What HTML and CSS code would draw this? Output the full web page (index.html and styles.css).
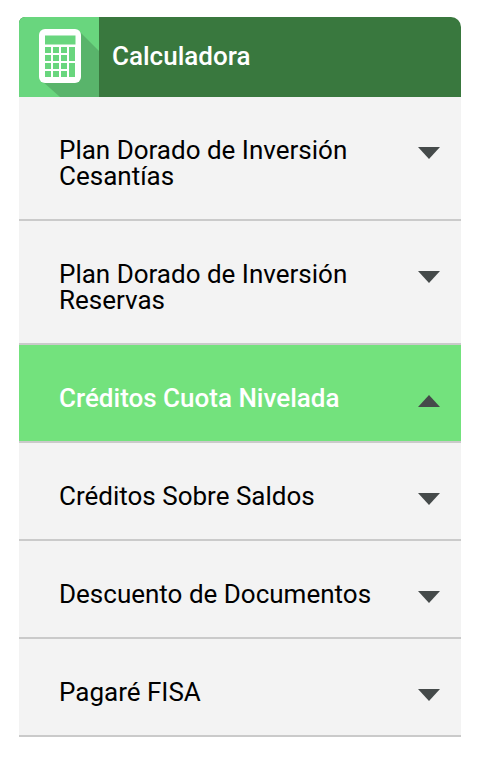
FILE: index.html
```html
<!DOCTYPE html>
<html lang="es">
<head>
<meta charset="utf-8">
<meta name="viewport" content="width=device-width, initial-scale=1">
<title>Calculadora</title>
<link rel="stylesheet" href="styles.css">
</head>
<body>
<main class="panel">
  <header class="panel-header">
    <svg class="logo" viewBox="0 0 80 80" aria-hidden="true">
      <rect width="80" height="80" fill="#69d67e"/>
      <path d="M61 15L80 34V80H41L23 64Z" fill="#59b46b"/>
      <rect x="20" y="12" width="42" height="54" rx="6" fill="#fff"/>
      <path d="M26 18.500h30.500v9H26zM26 30h6v6h-6zM34 30h6v6h-6zM42 30h6v6h-6zM26 38h6v6h-6zM34 38h6v6h-6zM42 38h6v6h-6zM26 46h6v6h-6zM34 46h6v6h-6zM42 46h6v6h-6zM26 54h6v6h-6zM34 54h6v6h-6zM42 54h6v6h-6zM50 30h6v14h-6zM50 46h6v14h-6z" fill="#69d67e"/>
    </svg>
    <h1 class="title">Calculadora</h1>
  </header>
  <nav>
    <button class="item" type="button" aria-expanded="false"><span class="label">Plan Dorado de Inversión Cesantías</span><svg class="arrow" viewBox="0 0 22 12" aria-hidden="true"><path d="M0 0H22L11 12Z"/></svg></button>
    <button class="item" type="button" aria-expanded="false"><span class="label">Plan Dorado de Inversión Reservas</span><svg class="arrow" viewBox="0 0 22 12" aria-hidden="true"><path d="M0 0H22L11 12Z"/></svg></button>
    <button class="item active" type="button" aria-expanded="true"><span class="label">Créditos Cuota Nivelada</span><svg class="arrow" viewBox="0 0 22 12" aria-hidden="true"><path d="M0 12H22L11 0Z"/></svg></button>
    <button class="item" type="button" aria-expanded="false"><span class="label">Créditos Sobre Saldos</span><svg class="arrow" viewBox="0 0 22 12" aria-hidden="true"><path d="M0 0H22L11 12Z"/></svg></button>
    <button class="item" type="button" aria-expanded="false"><span class="label">Descuento de Documentos</span><svg class="arrow" viewBox="0 0 22 12" aria-hidden="true"><path d="M0 0H22L11 12Z"/></svg></button>
    <button class="item" type="button" aria-expanded="false"><span class="label">Pagaré FISA</span><svg class="arrow" viewBox="0 0 22 12" aria-hidden="true"><path d="M0 0H22L11 12Z"/></svg></button>
  </nav>
</main>
</body>
</html>
```
FILE: styles.css
```css
* { box-sizing: border-box; }
body {
  margin: 0;
  padding: 17px 17px 17px 19px;
  background: #fff;
  font-family: Roboto, sans-serif;
  font-size: 26px;
  line-height: 26px;
}
.panel-header {
  display: flex;
  align-items: center;
  gap: 13px;
  background: #39783e;
  border-radius: 6px 10px 0 0;
  overflow: hidden;
}
.logo { width: 80px; height: 80px; }
.title {
  margin: 0;
  padding-bottom: 2px;
  color: #fff;
  font-size: 26px;
  font-weight: 500;
}
.item {
  display: flex;
  align-items: flex-start;
  justify-content: space-between;
  width: 100%;
  padding: 40px 21px 30px 40px;
  border: 0;
  border-bottom: 2px solid #cacaca;
  background: #f3f3f3;
  color: #000;
  font: inherit;
  text-align: left;
  cursor: pointer;
}
.label { max-width: 320px; }
.active {
  background: #73e27d;
  color: #fff;
  font-weight: 500;
}
.arrow {
  flex: none;
  width: 22px;
  height: 12px;
  margin-top: 10px;
  fill: #454a4a;
}
```
